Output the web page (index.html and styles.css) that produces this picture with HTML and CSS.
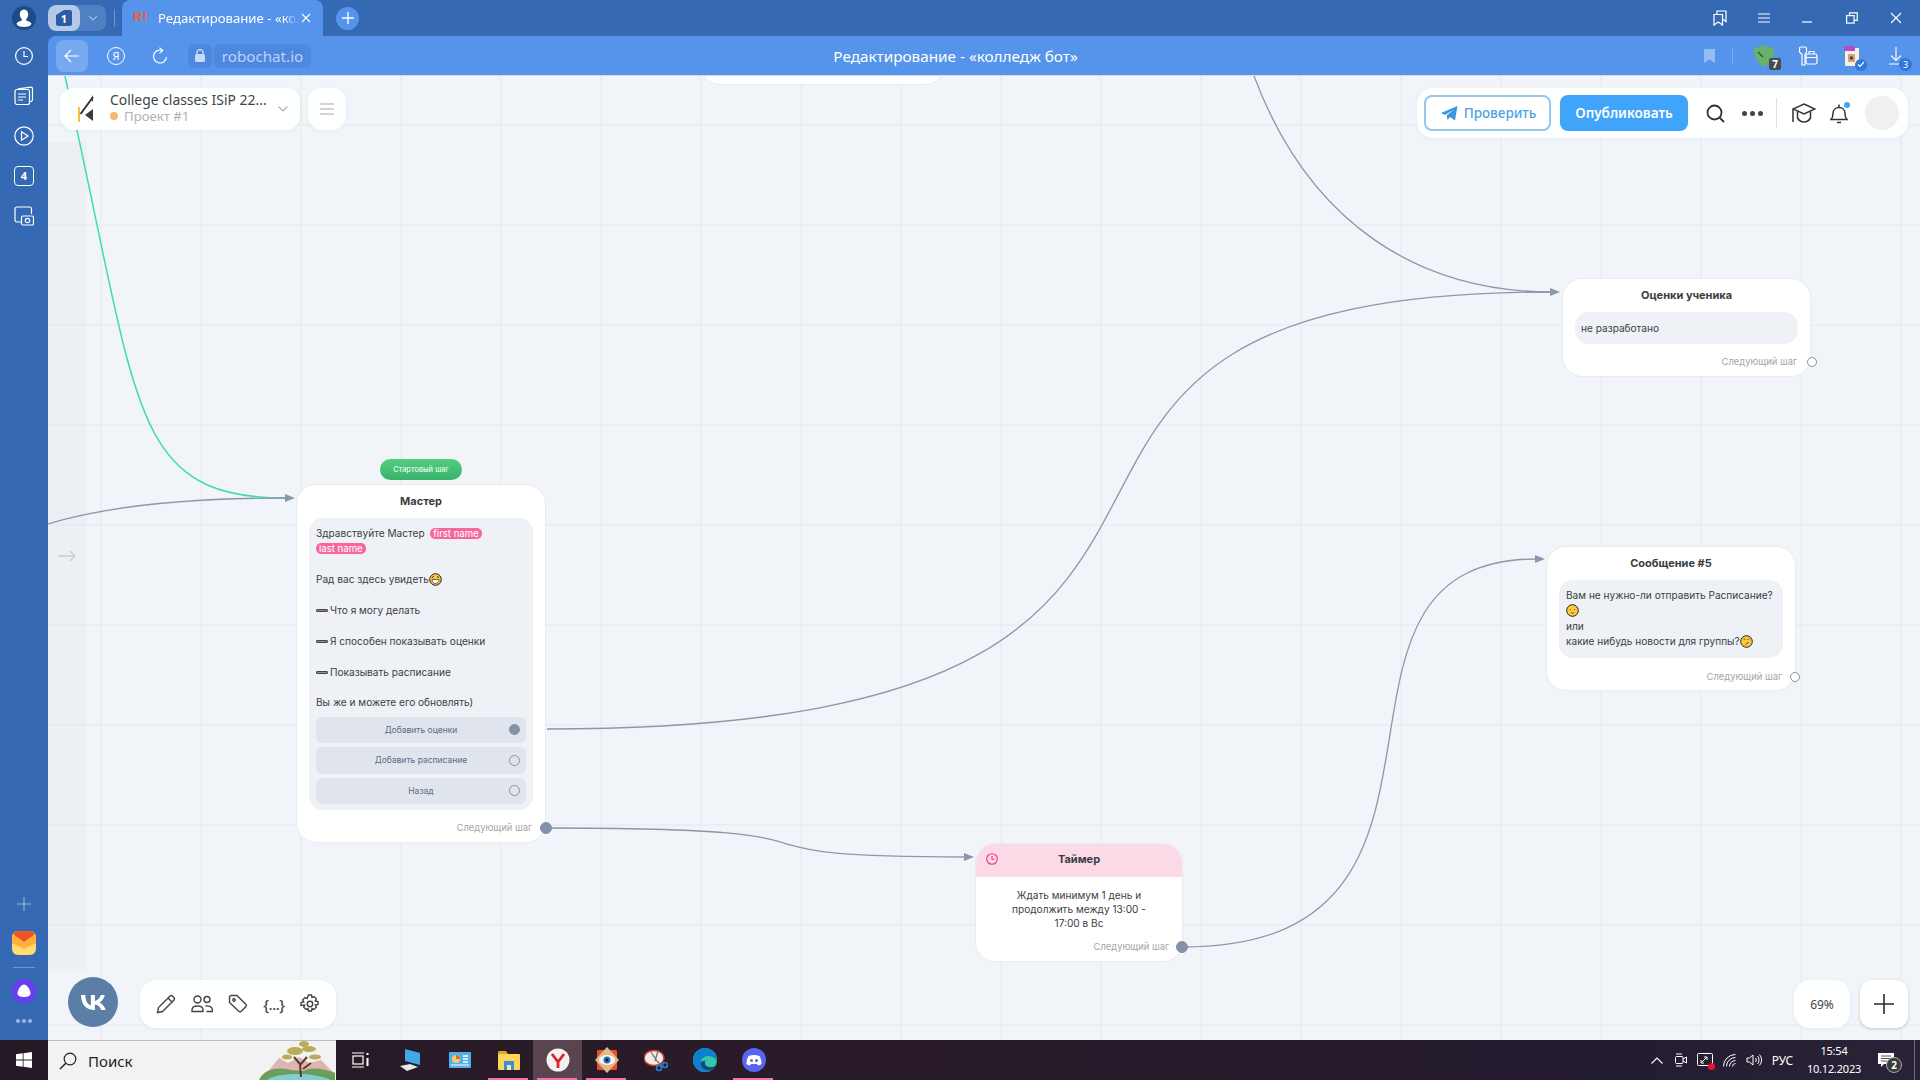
FILE: index.html
```html
<!DOCTYPE html>
<html lang="ru">
<head>
  <meta charset="UTF-8" />
  <title>Редактирование - «колледж бот»</title>
  <link rel="stylesheet" href="styles.css">
</head>
<body>
<div class="screen">

  <!-- browser title bar -->
  <header class="titlebar">
    <div class="profile">
      <svg width="24" height="24" viewBox="0 0 24 24"><circle cx="12" cy="12" r="12" fill="#1f4a86"/><path d="M12 3.500c2.800 0 4.200 2.200 4.200 4.800 0 2.200-1 4-2 4.800v1.400c2 .8 4.600 1.500 5.300 3.200-.8 2.200-3.600 3.300-7.500 3.300s-6.700-1.100-7.500-3.300c.7-1.700 3.300-2.400 5.300-3.200v-1.400c-1-.8-2-2.600-2-4.800 0-2.600 1.400-4.800 4.200-4.800z" fill="#fff"/></svg>
    </div>
    <div class="tabgroup">
      <div class="tabgroup-num">
        <svg width="18" height="18" viewBox="0 0 18 18"><path d="M1 6l8-5h6a2 2 0 0 1 2 2v12a2 2 0 0 1-2 2H3a2 2 0 0 1-2-2z" fill="#2a5ca6"/></svg>
        <span>1</span>
      </div>
      <div class="tabgroup-arrow">
        <svg width="10" height="6" viewBox="0 0 10 6"><path d="M1 1l4 4 4-4" fill="none" stroke="#9cbbe6" stroke-width="1.200"/></svg>
      </div>
    </div>
    <div class="tab-sep"></div>
    <div class="tab">
      <span class="tab-fav">R!</span>
      <span class="tab-title">Редактирование - «колледж бот»</span>
      <svg width="10" height="10" viewBox="0 0 10 10"><path d="M1 1l8 8M9 1l-8 8" stroke="#fff" stroke-width="1.100"/></svg>
    </div>
    <div class="tab-new">
      <svg width="12" height="12" viewBox="0 0 12 12"><path d="M6 0v12M0 6h12" stroke="#fff" stroke-width="1.400"/></svg>
    </div>
    <div class="win-buttons">
      <div class="win-btn"><svg width="14" height="16" viewBox="0 0 14 16" fill="none" stroke="#fff" stroke-width="1.200"><path d="M1 4.500h8.500v10.500l-4.250-3-4.250 3z"/><path d="M4 4.500V1h9v10.500l-3.500-2.500"/></svg></div>
      <div class="win-btn"><svg width="14" height="10" viewBox="0 0 14 10" stroke="#fff" stroke-width="1.100"><path d="M1 1h12M1 5h12M1 9h12"/></svg></div>
      <div class="win-btn"><svg width="12" height="12" viewBox="0 0 12 12" stroke="#fff" stroke-width="1.200"><path d="M0 10h10"/></svg></div>
      <div class="win-btn"><svg width="12" height="12" viewBox="0 0 12 12" fill="none" stroke="#fff" stroke-width="1.200"><rect x=".6" y="3.600" width="7.500" height="7.500"/><path d="M3.500 3.500V.8h7.700v7.500H8"/></svg></div>
      <div class="win-btn"><svg width="12" height="12" viewBox="0 0 12 12" stroke="#fff" stroke-width="1.100"><path d="M1 1l10 10M11 1L1 11"/></svg></div>
    </div>
  </header>

  <div class="mid">
    <!-- browser side panel -->
    <aside class="sidebar">
      <div class="side-btn"><svg width="20" height="20" viewBox="0 0 20 20" fill="none" stroke="#fff" stroke-width="1.200"><circle cx="10" cy="10" r="8.400"/><path d="M10 5v5.500h4"/></svg></div>
      <div class="side-btn"><svg width="20" height="20" viewBox="0 0 20 20" fill="none" stroke="#fff" stroke-width="1.200"><rect x="1" y="3.500" width="14.500" height="15" rx="2"/><path d="M4 8h8M4 11h8M4 14h5"/><path d="M4.500 3.500V2.800L17 1.200a1.500 1.500 0 0 1 1.500 1.500v11a2 2 0 0 1-3 1.500"/></svg></div>
      <div class="side-btn"><svg width="20" height="20" viewBox="0 0 20 20" fill="none" stroke="#fff" stroke-width="1.200"><circle cx="10" cy="10" r="9.200"/><path d="M7.500 5.800l6.500 4.200-6.500 4.200z"/></svg></div>
      <div class="side-btn"><span class="side-four">4</span></div>
      <div class="side-btn"><svg width="20" height="20" viewBox="0 0 20 20" fill="none" stroke="#fff" stroke-width="1.200"><path d="M7 16H3a2 2 0 0 1-2-2V3a2 2 0 0 1 2-2h12.500a2 2 0 0 1 2 2v5"/><rect x="7.500" y="10" width="12" height="9" rx="1.500" fill="#3569b3"/><circle cx="13.500" cy="14.500" r="2.200"/></svg></div>
      <div class="side-spacer"></div>
      <div class="side-plus"><svg width="16" height="16" viewBox="0 0 16 16" stroke="#9db9e2" stroke-width="1.100"><path d="M8 1v14M1 8h14"/></svg></div>
      <div class="side-mail">
        <svg width="24" height="24" viewBox="0 0 24 24"><rect width="24" height="24" rx="6" fill="#ffdb70"/><path d="M0 12v-6a6 6 0 0 1 6-6h12a6 6 0 0 1 6 6v6l-12 6z" fill="#ffb13b"/><path d="M1 3a6 6 0 0 1 5-3h12a6 6 0 0 1 5 3l-11 8z" fill="#f0522a"/></svg>
      </div>
      <div class="side-line"></div>
      <div class="side-alice">
        <svg width="24" height="24" viewBox="0 0 24 24"><circle cx="12" cy="12" r="12" fill="#6a3ef0"/><path d="M12 5.500c3 0 6.500 5.500 6.500 9 0 2.500-3 3.500-6.500 3.500s-6.500-1-6.500-3.500c0-3.500 3.500-9 6.500-9z" fill="#fff"/></svg>
      </div>
      <div class="side-dots"><i></i><i></i><i></i></div>
    </aside>

    <div class="browser">
      <!-- address bar -->
      <div class="addressbar">
        <div class="nav-back"><svg width="16" height="14" viewBox="0 0 16 14" fill="none" stroke="#fff" stroke-width="1.200"><path d="M15 7H1M7 1L1 7l6 6"/></svg></div>
        <div class="nav-ya"><span>Я</span></div>
        <div class="nav-reload"><svg width="16" height="18" viewBox="0 0 16 18" fill="none" stroke="#fff" stroke-width="1.200"><path d="M10.500 3.500A6.500 6.500 0 1 0 14.500 10"/><path d="M7.500 .6l3.200 2.900-3.200 2.900"/></svg></div>
        <div class="lock-chip"><svg width="10" height="13" viewBox="0 0 10 13"><path d="M2 5.500V3.500a3 3 0 0 1 6 0v2" fill="none" stroke="#c8dcf8" stroke-width="1.300"/><rect y="5" width="10" height="8" rx="1.500" fill="#c8dcf8"/></svg></div>
        <div class="url-chip">robochat.io</div>
        <div class="page-title">Редактирование - «колледж бот»</div>
        <div class="addr-tools">
          <svg class="addr-mark" width="11" height="14" viewBox="0 0 11 14"><path d="M0 0h11v14l-5.500-3.500L0 14z" fill="#94bdf4"/></svg>
          <div class="addr-sep"></div>
          <div class="addr-btn addr-shield">
            <svg width="20" height="22" viewBox="0 0 20 22"><path d="M10 0c3 2 6 2.500 10 2.500 0 8-2 15-10 19.500C2 17.500 0 10.500 0 2.500 4 2.500 7 2 10 0z" fill="#67b26a"/><path d="M4 7l5 5" stroke="#2f5a36" stroke-width="1.500"/></svg>
            <span class="shield-num">7</span>
          </div>
          <div class="addr-btn"><svg width="20" height="20" viewBox="0 0 20 20" fill="none" stroke="#fff" stroke-width="1.200"><path d="M4 19V8.500L1.500 6V2.500a1.500 1.500 0 0 1 1.500-1.500h4a1.500 1.500 0 0 1 1.500 1.500V6L7 8.500V19z"/><rect x="8" y="8" width="11" height="10" rx="1.500"/><path d="M8 11.500h11M11 8V5.500h5V8"/></svg></div>
          <div class="addr-btn addr-file">
            <svg width="16" height="20" viewBox="0 0 16 20"><rect x="1" y="2" width="14" height="18" rx="1" fill="#f4f0e6"/><rect y="0" width="11" height="5" fill="#b04fc0"/><rect x="4" y="8" width="7" height="8" fill="#e0a070"/><circle cx="7.500" cy="12" r="1.800" fill="#2f4a78"/></svg>
            <span class="file-check"><svg width="8" height="7" viewBox="0 0 8 7" fill="none" stroke="#fff" stroke-width="1.200"><path d="M1 3.500l2 2L7 1"/></svg></span>
          </div>
          <div class="addr-btn addr-down">
            <svg width="14" height="18" viewBox="0 0 14 18" fill="none" stroke="#fff" stroke-width="1.100"><path d="M7 0v13M2 8.500l5 5 5-5M0 17h11"/></svg>
            <span class="down-num">3</span>
          </div>
        </div>
      </div>

      <!-- robochat canvas -->
      <main class="canvas">
        <div class="side-strip">
          <svg width="18" height="12" viewBox="0 0 18 12" fill="none" stroke="#c6ccd4" stroke-width="1.300"><path d="M0 6h17M12 1l5 5-5 5"/></svg>
        </div>

        <svg class="links" width="1872" height="964" viewBox="48 76 1872 964" fill="none">
          <path class="link-green" d="M65 76C140 406 127 498 286 498"/>
          <path class="link" d="M48 524C110 505 190 498 286 498"/>
          <path class="link" d="M547 729C1400 729 860 292 1552 292"/>
          <path class="link" d="M1254 76C1310 225 1420 292 1552 292"/>
          <path class="link" d="M547 828C900 828 680 857 966 857"/>
          <path class="link" d="M1183 947C1509 947 1283 559 1537 559"/>
          <path class="link-tip" d="M285 494l10 4-10 4zM1550 288l10 4-10 4zM1535 555l10 4-10 4zM964 853l10 4-10 4z"/>
        </svg>

        <div class="node node-cut"></div>

        <div class="start-badge">Стартовый шаг</div>
        <section class="node node-master">
          <h4 class="node-title">Мастер</h4>
          <div class="node-body">
            <p>Здравствуйте Мастер&nbsp; <span class="tag">first name</span><br><span class="tag">last name</span></p>
            <p>Рад вас здесь увидеть<svg class="emoji" width="13" height="13" viewBox="0 0 13 13"><circle cx="6.500" cy="6.500" r="5.800" fill="#ffc83d" stroke="#222"/><path d="M3 6.500h7c0 2.500-1.500 4-3.500 4S3 9 3 6.500z" fill="#fff" stroke="#333" stroke-width=".7"/><path d="M3 4.500l2-1M10 4.500l-2-1" stroke="#333"/></svg></p>
            <p><i class="minus"></i>Что я могу делать</p>
            <p><i class="minus"></i>Я способен показывать оценки</p>
            <p><i class="minus"></i>Показывать расписание</p>
            <p class="last">Вы же и можете его обновлять)</p>
            <div class="answers">
              <div class="answer">Добавить оценки<i class="port-in filled"></i></div>
              <div class="answer">Добавить расписание<i class="port-in"></i></div>
              <div class="answer">Назад<i class="port-in"></i></div>
            </div>
          </div>
          <div class="node-next">Следующий шаг<i class="port filled"></i></div>
        </section>

        <section class="node node-grades">
          <h4 class="node-title">Оценки ученика</h4>
          <div class="node-body">не разработано</div>
          <div class="node-next">Следующий шаг<i class="port"></i></div>
        </section>

        <section class="node node-msg">
          <h4 class="node-title">Сообщение #5</h4>
          <div class="node-body">Вам не нужно-ли отправить Расписание?<br><svg class="emoji" width="13" height="13" viewBox="0 0 13 13"><circle cx="6.500" cy="6.500" r="5.800" fill="#ffc83d" stroke="#222"/><path d="M4.500 5v1M8.500 5v1M5 9h3" stroke="#553" stroke-width=".9"/></svg><br>или<br>какие нибудь новости для группы?<svg class="emoji" width="13" height="13" viewBox="0 0 13 13"><circle cx="6.500" cy="6.500" r="5.800" fill="#ffc83d" stroke="#222"/><path d="M3.500 4l2 .5M7.500 4.500l2-.5M6 8.500l3-1" stroke="#553" stroke-width=".9"/><path d="M3 10l3-1 1 2-2 1.500z" fill="#e89a2c"/></svg></div>
          <div class="node-next">Следующий шаг<i class="port"></i></div>
        </section>

        <section class="node node-timer">
          <div class="timer-head">
            <svg width="12" height="12" viewBox="0 0 12 12" fill="none" stroke="#f0357f" stroke-width="1.100"><circle cx="6" cy="6" r="5.300"/><path d="M6 3v3.300h2.500"/></svg>
            <h4 class="node-title">Таймер</h4>
          </div>
          <div class="timer-text">Ждать минимум 1 день и<br>продолжить между 13:00 -<br>17:00 в Вс</div>
          <div class="node-next">Следующий шаг<i class="port filled"></i></div>
        </section>

        <!-- floating panels -->
        <div class="panel panel-project">
          <svg class="project-logo" width="17" height="30" viewBox="0 0 17 30"><path d="M1 13v15" stroke="#f4c23e" stroke-width="2"/><path d="M2.500 20L15 3" stroke="#333" stroke-width="2"/><path d="M15 1v7l-2-3z" fill="#333"/><path d="M15 15v12l-8-6z" fill="#3c3c3c"/></svg>
          <div class="project-text">
            <div class="project-name">College classes ISiP 22...</div>
            <div class="project-sub"><i class="project-dot"></i>Проект #1</div>
          </div>
          <svg class="project-arrow" width="10" height="6" viewBox="0 0 10 6" fill="none" stroke="#aaa" stroke-width="1.200"><path d="M.6.6L5 5 9.400.6"/></svg>
        </div>
        <div class="panel panel-menu">
          <svg width="14" height="12" viewBox="0 0 14 12" stroke="#a8a8a8" stroke-width="1.200"><path d="M0 1h14M0 6h14M0 11h14"/></svg>
        </div>

        <div class="panel panel-actions">
          <button class="btn btn-check">
            <svg width="17" height="15" viewBox="0 0 17 15"><path d="M0 7L16.500 0 14 14.500 9 11l-2.500 3-.8-4.500L13 3.500 4 9z" fill="#3a97e0"/></svg>
            Проверить
          </button>
          <button class="btn btn-publish">Опубликовать</button>
          <div class="act act-search"><svg width="19" height="19" viewBox="0 0 19 19" fill="none" stroke="#333" stroke-width="1.800"><circle cx="8.500" cy="8.500" r="7"/><path d="M13.500 13.500L18 18"/></svg></div>
          <div class="act act-dots"><i></i><i></i><i></i></div>
          <div class="act-sep"></div>
          <div class="act act-hat"><svg width="24" height="20" viewBox="0 0 24 20" fill="none" stroke="#333" stroke-width="1.500"><path d="M12 1L23 6l-11 5L1 6z"/><path d="M5.500 8.500V15c1.500 2.500 4 4 6.500 4s5-1.500 6.500-4V8.500M1 6v13"/></svg></div>
          <div class="act act-bell">
            <svg width="18" height="21" viewBox="0 0 18 21" fill="none" stroke="#333" stroke-width="1.500"><path d="M1 16.500h16c-1.500-1.500-2-3-2-6 0-3.500-2.500-6-6-6s-6 2.500-6 6c0 3-.5 4.500-2 6z"/><path d="M9 1.500v3M7 19.500h4"/></svg>
            <i class="bell-dot"></i>
          </div>
          <div class="avatar"></div>
        </div>

        <div class="vk-btn">
          <svg width="25" height="15" viewBox="0 0 25 15"><path d="M13.600 15C5 15 .2 9.400 0 0h4.300c.14 6.900 3.200 9.800 5.600 10.400V0h4v6c2.400-.26 5-3 5.900-6h4c-.7 3.700-3.400 6.400-5.400 7.500 2 .9 5.100 3.300 6.300 7.500h-4.400c-.95-2.900-3.300-5.200-6.400-5.500V15z" fill="#fff"/></svg>
        </div>
        <div class="panel panel-tools">
          <div class="tool"><svg width="20" height="20" viewBox="0 0 20 20" fill="none" stroke="#444" stroke-width="1.400"><path d="M1.500 18.500l1-5L13.800 2.200a2 2 0 0 1 2.800 0l1.200 1.200a2 2 0 0 1 0 2.800L6.500 17.500z"/><path d="M12 4l4 4"/></svg></div>
          <div class="tool"><svg width="22" height="18" viewBox="0 0 22 18" fill="none" stroke="#444" stroke-width="1.400"><circle cx="6.500" cy="4.500" r="3.500"/><circle cx="16" cy="4.500" r="3"/><path d="M1 16.500v-1.500c0-2.500 2.500-4 5.500-4s5.500 1.500 5.500 4v1.500zM14.500 11c3.500-.5 6.800 1 6.800 3.500v2H15.500"/></svg></div>
          <div class="tool"><svg width="20" height="20" viewBox="0 0 20 20" fill="none" stroke="#444" stroke-width="1.400"><path d="M1.500 3a1.500 1.500 0 0 1 1.500-1.500h6l9 9a1.500 1.500 0 0 1 0 2l-5 5a1.500 1.500 0 0 1-2 0l-9.500-9z"/><circle cx="6" cy="6" r="1.200"/></svg></div>
          <div class="tool tool-code">{...}</div>
          <div class="tool"><svg width="20" height="20" viewBox="0 0 20 20" fill="none" stroke="#444" stroke-width="1.400"><circle cx="10" cy="10" r="2.700"/><path d="M8.500 1h3l.5 2.500 2-.9 2.300 2.200-1 2.100 2.700.6v3l-2.700.6 1 2.100-2.300 2.200-2-.9-.5 2.500h-3l-.5-2.500-2 .9-2.300-2.200 1-2.100L1 11.500v-3l2.700-.6-1-2.100L5 3.600l2 .9z"/></svg></div>
        </div>

        <div class="panel panel-zoom">69%</div>
        <div class="panel panel-plus">
          <svg width="20" height="20" viewBox="0 0 20 20" stroke="#2b2b2b" stroke-width="1.600"><path d="M10 0v20M0 10h20"/></svg>
        </div>
      </main>
    </div>
  </div>

  <!-- windows taskbar -->
  <footer class="taskbar">
    <div class="start">
      <svg width="16" height="16" viewBox="0 0 16 16" fill="#fff"><path d="M0 2.300l6.700-1V7.600H0zM7.500 1.200L16 0v7.600H7.500zM0 8.400h6.700v6.300l-6.700-1zM7.500 8.400H16V16l-8.500-1.200z"/></svg>
    </div>
    <div class="search">
      <svg width="18" height="18" viewBox="0 0 18 18" fill="none" stroke="#222" stroke-width="1.200"><circle cx="11" cy="7" r="5.800"/><path d="M6.800 11.200L1 17" stroke-width="1.500"/></svg>
      <span>Поиск</span>
      <svg class="search-art" width="76" height="39" viewBox="0 0 76 39">
        <path d="M2 39L20 17l9 5 11-6 10 6 12-3 14 14v6z" fill="#e0b4b0"/>
        <path d="M0 39c6-12 20-13 32-10l12 1c8-4 20-3 32 2v7z" fill="#6a9e5c"/>
        <path d="M8 39c8-7 44-9 64 0z" fill="#7fcfd0"/>
        <path d="M42 36l-1-13-6-7M41 24l7-8M44 28l8-6" fill="none" stroke="#5a3c28" stroke-width="2"/>
        <g fill="#b9ab58"><ellipse cx="36" cy="10" rx="8" ry="4"/><ellipse cx="50" cy="8" rx="7" ry="3"/><ellipse cx="45" cy="3" rx="5" ry="3"/><ellipse cx="28" cy="16" rx="5" ry="2.500"/><ellipse cx="56" cy="16" rx="6" ry="2.500"/></g>
      </svg>
    </div>
    <div class="taskview">
      <svg width="18" height="16" viewBox="0 0 18 16" fill="none" stroke="#fff" stroke-width="1.200"><path d="M0 1h12M0 15h12"/><rect x="1" y="4" width="10" height="8"/><path d="M15.500 1v2M15.500 6v8" stroke-width="2"/></svg>
    </div>
    <div class="task-item">
      <svg width="24" height="24" viewBox="0 0 24 24"><path d="M6 1l15 4v12L6 13z" fill="#3fa9ec"/><path d="M1 18l10-2 8 3-11 4z" fill="#e8e8e8"/></svg>
    </div>
    <div class="task-item">
      <svg width="22" height="16" viewBox="0 0 22 16"><rect width="22" height="16" rx="1" fill="#52b0e8"/><circle cx="7" cy="7" r="4" fill="#f4c87a"/><path d="M7 7V3a4 4 0 0 1 4 4z" fill="#e66a2c"/><path d="M14 4h5M14 7h5M14 10h5" stroke="#fff" stroke-width="1.500"/><path d="M2 13h18" stroke="#fff"/></svg>
    </div>
    <div class="task-item open">
      <svg width="22" height="20" viewBox="0 0 22 20"><path d="M0 2a1 1 0 0 1 1-1h7l2 3h-10z" fill="#e5a620"/><rect y="4" width="22" height="16" rx="1" fill="#fbd65a"/><rect x="6" y="11" width="10" height="9" fill="#3a8fd6"/><rect x="9" y="15" width="4" height="5" fill="#fbe9a0"/></svg>
    </div>
    <div class="task-item open active">
      <svg width="24" height="24" viewBox="0 0 24 24"><circle cx="12" cy="12" r="11.500" fill="#f2f2f2"/><path d="M6 6l6 8 6-8M12 14v6" fill="none" stroke="#e2202c" stroke-width="2.800"/></svg>
    </div>
    <div class="task-item open">
      <svg width="24" height="26" viewBox="0 0 24 26"><rect x="2" y="3" width="20" height="20" rx="1" fill="#e9532a"/><path d="M12 0l12 13-12 13L0 13z" fill="#e3b98a"/><ellipse cx="12" cy="13" rx="8" ry="5" fill="#f4f4f4"/><circle cx="12" cy="13" r="3.500" fill="#2b6fc0"/><circle cx="12" cy="13" r="1.400" fill="#111"/></svg>
    </div>
    <div class="task-item">
      <svg width="24" height="24" viewBox="0 0 24 24"><ellipse cx="10" cy="10" rx="10" ry="7.500" fill="#f2ece8" stroke="#c43a30" stroke-width="1.500"/><path d="M7 4l6 9 5 5M14 3l-3 10" fill="none" stroke="#777" stroke-width="1.300"/><circle cx="15" cy="20" r="2.500" fill="none" stroke="#2a7fd0" stroke-width="1.600"/><circle cx="21" cy="17" r="2.500" fill="none" stroke="#2a7fd0" stroke-width="1.600"/></svg>
    </div>
    <div class="task-item">
      <svg width="24" height="24" viewBox="0 0 24 24"><circle cx="12" cy="12" r="12" fill="#35c8a6"/><path d="M12 0A12 12 0 0 0 12 24c3 0 5-1 6.500-2-6 1.500-11-2-11-7 0-4 4-7 8-7s7 2 8.500 6C24 5 18 0 12 0z" fill="#0f7fd0"/><path d="M7.500 15c0 5 5 8.500 11 7 2-1 3.500-2.500 4.500-4.500-3 2-6.500 2-8.500 1-3-1.500-3-4-2-6-3 .5-5 1-5 2.500z" fill="#14477e"/></svg>
    </div>
    <div class="task-item open">
      <svg width="24" height="24" viewBox="0 0 24 24"><circle cx="12" cy="12" r="12" fill="#5865f2"/><path d="M6.500 8c3.500-1.500 7.500-1.500 11 0 1.500 2.500 2 5 2 8-1.300 1-2.500 1.300-3.500 1.500l-1-1.500H9L8 17.500c-1-.2-2.200-.5-3.500-1.500 0-3 .5-5.500 2-8z" fill="#fff"/><circle cx="9.500" cy="12.500" r="1.500" fill="#5865f2"/><circle cx="14.500" cy="12.500" r="1.500" fill="#5865f2"/></svg>
    </div>

    <div class="tray">
      <div class="tray-item tray-w24"><svg width="12" height="7" viewBox="0 0 12 7" fill="none" stroke="#fff" stroke-width="1.100"><path d="M.5 6.500L6 1l5.500 5.500"/></svg></div>
      <div class="tray-item tray-w24"><svg width="12" height="14" viewBox="0 0 12 14" fill="none" stroke="#fff"><rect x="0.500" y="3.500" width="7.500" height="7" rx="1"/><path d="M8 6l3.500-2v6L8 8M1 1h6M1 13h6"/></svg></div>
      <div class="tray-item tray-w23">
        <svg width="16" height="14" viewBox="0 0 16 14" fill="none" stroke="#fff"><rect x=".5" y=".5" width="15" height="12" rx="1"/><path d="M5 9l5-5M7 4h3v3M4 7v3h3"/></svg>
        <i class="rec-dot"></i>
      </div>
      <div class="tray-item tray-w27"><svg width="13" height="13" viewBox="0 0 13 13" fill="none" stroke="#fff"><path d="M.5 12.500A12 12 0 0 1 12.500 .5M3.500 12.500a9 9 0 0 1 9-9M6.500 12.500a6 6 0 0 1 6-6M9.500 12.500a3 3 0 0 1 3-3"/></svg></div>
      <div class="tray-item tray-w22"><svg width="17" height="12" viewBox="0 0 17 12" fill="none" stroke="#fff"><path d="M1 4h2.500L7 1v10L3.500 8H1zM9.500 4a3 3 0 0 1 0 4M11.500 2a6 6 0 0 1 0 8M13.500 .6a8 8 0 0 1 0 10.800"/></svg></div>
      <div class="tray-lang">РУС</div>
      <div class="tray-clock"><div>15:54</div><div>10.12.2023</div></div>
      <div class="tray-notify">
        <svg width="16" height="15" viewBox="0 0 16 15"><path d="M0 0h16v11H6l-3 3v-3H0z" fill="#fff"/><path d="M3 3h10M3 5.500h10M3 8h6" stroke="#555"/></svg>
        <span class="notify-num">2</span>
      </div>
      <div class="tray-edge"></div>
    </div>
  </footer>
</div>
</body>
</html>
```

FILE: styles.css
```css
:root{
  --title:#3569b3;
  --addr:#5594ea;
  --canvas:#f1f4f8;
  --grid:#ebeff3;
  --link:#8c97ab;
  --port:#8492a8;
  --node-font:"Inter",sans-serif;
}
*{box-sizing:border-box;}
html,body{margin:0;height:100%;}
body{
  font-family:"Noto Sans",sans-serif;
  overflow:hidden;
}
svg{display:block;}
i{font-style:normal;}
.screen{
  width:1920px;
  height:1080px;
  display:flex;
  flex-direction:column;
  background:var(--title);
}

/* title bar */
.titlebar{
  height:36px;
  display:flex;
  align-items:center;
  flex:none;
}
.profile{margin:0 12px;}
.tabgroup{
  display:flex;
  width:58px;
  height:26px;
  border-radius:8px;
  background:#4f80c4;
  overflow:hidden;
}
.tabgroup-num{
  position:relative;
  width:32px;
  display:flex;
  align-items:center;
  justify-content:center;
  background:#b4c9e6;
  border-radius:8px;
}
.tabgroup-num span{
  position:absolute;
  color:#fff;
  font-size:11px;
  font-weight:700;
}
.tabgroup-arrow{
  flex:1;
  display:flex;
  align-items:center;
  justify-content:center;
}
.tab-sep{
  width:1px;
  height:18px;
  background:#6f95cf;
  margin:0 7px 0 8px;
}
.tab{
  width:201px;
  height:36px;
  background:var(--addr);
  border-radius:8px 8px 0 0;
  display:flex;
  align-items:center;
  padding:0 12px 0 11px;
  color:#fff;
}
.tab-fav{
  width:25px;
  flex:none;
  color:#ef5f2c;
  font:700 13px/1 "Liberation Sans",sans-serif;
  margin-top:-3px;
}
.tab-title{
  flex:1;
  font-size:13.200px;
  white-space:nowrap;
  overflow:hidden;
  -webkit-mask-image:linear-gradient(90deg,#000 90%,transparent);
  mask-image:linear-gradient(90deg,#000 90%,transparent);
}
.tab svg{margin-left:3px;}
.tab-new{
  width:23px;
  height:23px;
  border-radius:50%;
  background:var(--addr);
  display:flex;
  align-items:center;
  justify-content:center;
  margin-left:13px;
}
.win-buttons{
  margin-left:auto;
  margin-right:2px;
  display:flex;
}
.win-btn{
  width:44px;
  height:36px;
  display:flex;
  align-items:center;
  justify-content:center;
}

/* side panel */
.mid{flex:1;display:flex;min-height:0;}
.sidebar{
  width:48px;
  flex:none;
  display:flex;
  flex-direction:column;
  align-items:center;
}
.side-btn{
  height:40px;
  flex:none;
  display:flex;
  align-items:center;
  justify-content:center;
}
.side-four{
  width:20px;
  height:20px;
  border:1.200px solid #fff;
  border-radius:4px;
  color:#fff;
  font-size:11px;
  font-weight:700;
  line-height:17px;
  text-align:center;
}
.side-spacer{flex:1;}
.side-plus{margin-bottom:19px;}
.side-mail{margin-bottom:12px;}
.side-line{width:22px;height:1px;background:#6f95cf;margin-bottom:11px;}
.side-alice{margin-bottom:16.500px;}
.side-dots{display:flex;gap:2px;margin-bottom:17px;}
.side-dots i{width:4px;height:4px;border-radius:50%;background:#9db9e2;}

/* address bar */
.browser{flex:1;display:flex;flex-direction:column;min-width:0;}
.addressbar{
  height:40px;
  flex:none;
  background:var(--addr);
  border-radius:8px 0 0 0;
  display:flex;
  align-items:center;
  border-bottom:1px solid #d7dde6;
  padding-left:8px;
  position:relative;
}
.nav-back{
  width:32px;
  height:32px;
  border-radius:8px;
  background:#77a9ef;
  display:flex;
  align-items:center;
  justify-content:center;
}
.nav-ya{
  width:18px;
  height:18px;
  margin-left:19px;
  border:1.200px solid #fff;
  border-radius:50%;
  color:#fff;
  font-size:11px;
  line-height:15px;
  text-align:center;
}
.nav-reload{margin-left:27px;}
.lock-chip{
  width:24px;
  height:24px;
  margin-left:20px;
  border-radius:6px;
  background:#4d88de;
  display:flex;
  align-items:center;
  justify-content:center;
}
.url-chip{
  width:97px;
  height:24px;
  margin-left:2px;
  border-radius:6px;
  background:#4d88de;
  color:#b9d3f7;
  font-size:15.200px;
  line-height:24px;
  text-align:center;
}
.page-title{
  flex:1;
  padding-right:104px;
  text-align:center;
  color:#fff;
  font-size:15.300px;
  white-space:nowrap;
}
.addr-tools{display:flex;align-items:center;margin-right:2px;}
.addr-mark{margin-right:17px;}
.addr-sep{width:1px;height:16px;background:#7fa9e6;margin-right:9px;}
.addr-btn{
  position:relative;
  width:44px;
  height:32px;
  display:flex;
  align-items:center;
  justify-content:center;
}
.shield-num{
  position:absolute;
  right:5px;
  bottom:2px;
  width:12px;
  height:12px;
  background:#4a4a4a;
  border-radius:2px;
  color:#fff;
  font-size:10px;
  font-weight:700;
  line-height:12px;
  text-align:center;
}
.file-check{
  position:absolute;
  right:7px;
  bottom:1px;
  width:12px;
  height:12px;
  border-radius:50%;
  background:#2f78d8;
  display:flex;
  align-items:center;
  justify-content:center;
}
.down-num{
  position:absolute;
  right:6px;
  bottom:1px;
  width:13px;
  height:13px;
  border-radius:50%;
  background:#2f78d8;
  color:#fff;
  font-size:9px;
  line-height:13px;
  text-align:center;
}

/* canvas */
.canvas{
  flex:1;
  position:relative;
  overflow:hidden;
  background-color:var(--canvas);
  background-image:
    linear-gradient(90deg,var(--grid) 2px,transparent 2px),
    linear-gradient(var(--grid) 2px,transparent 2px);
  background-size:100px 100px;
  background-position:52px 48px;
}
.side-strip{
  position:absolute;
  left:0;
  top:66px;
  width:39px;
  height:827px;
  background:rgba(60,70,80,.025);
}
.side-strip svg{position:absolute;left:10px;top:408px;}
.links{position:absolute;left:0;top:0;}
.link{stroke:var(--link);stroke-width:1.300;}
.link-green{stroke:#3edcb2;stroke-width:1.500;}
.link-tip{fill:var(--link);}

.node{
  position:absolute;
  background:#fff;
  border:1px solid #e9ebee;
  border-radius:20px;
  font-family:var(--node-font);
  font-size:10.100px;
  color:#3c3f44;
  padding:1px 12px;
}
.node-title{
  margin:0;
  height:32px;
  text-align:center;
  font-size:11px;
  font-weight:700;
  line-height:30px;
  color:#3a3d42;
}
.node-body{
  background:#eef1f5;
  border-radius:14px;
  line-height:15.400px;
  padding:8px 7px;
  white-space:nowrap;
}
.node-next{
  position:absolute;
  right:13px;
  color:#a2a5ab;
  font-size:9.400px;
  line-height:14px;
}
.port{
  position:absolute;
  right:-19px;
  top:2px;
  width:10px;
  height:10px;
  border-radius:50%;
  background:#fff;
  border:1.500px solid var(--port);
}
.port.filled{background:var(--port);width:12px;height:12px;right:-20px;top:1px;}

.node-cut{left:652px;top:-40px;width:245px;height:49px;}
.start-badge{
  position:absolute;
  left:332px;
  top:383px;
  width:82px;
  height:21px;
  border-radius:11px;
  background:linear-gradient(#52cf7d,#38b26c);
  color:#fff;
  font-family:var(--node-font);
  font-size:7.500px;
  line-height:21px;
  text-align:center;
}
.node-master{left:248px;top:408px;width:250px;height:359px;}
.node-master .node-next{bottom:7px;}
.node-master .node-body{height:292px;padding-bottom:6px;}
.node-body p{margin:0 0 15.400px;}
.node-body p.last{margin-bottom:6px;}
.tag{
  background:#f6689c;
  color:#fff;
  border-radius:5px;
  padding:0 3px;
  font-size:9.600px;
}
.emoji{display:inline-block;vertical-align:-3px;}
.minus{
  display:inline-block;
  width:12px;
  height:3px;
  margin-right:2px;
  vertical-align:2px;
  background:#8f8f8f;
  border:.500px solid #444;
  border-radius:1px;
}
.answers{display:flex;flex-direction:column;gap:4px;}
.answer{
  position:relative;
  height:26.500px;
  border-radius:6px;
  background:#e0e5ed;
  color:#5d6b82;
  font-size:8.500px;
  line-height:27px;
  text-align:center;
}
.port-in{
  position:absolute;
  right:6px;
  top:7.500px;
  width:11px;
  height:11px;
  border-radius:50%;
  border:1.300px solid var(--port);
}
.port-in.filled{background:var(--port);}

.node-grades{left:1514px;top:202px;width:249px;height:99px;}
.node-grades .node-body{height:32px;padding:0 6px;line-height:32px;}
.node-grades .node-next{bottom:7px;}
.node-grades .port{right:-20px;}
.node-msg{left:1498px;top:470px;width:250px;height:145px;}
.node-msg .node-body{height:78px;}
.node-msg .node-next{bottom:6px;}
.node-msg .port{right:-18px;}

.node-timer{left:927px;top:767px;width:208px;height:119px;padding:0;}
.timer-head{
  height:33px;
  background:#fbd9e6;
  border-radius:19px 19px 0 0;
  position:relative;
}
.timer-head svg{position:absolute;left:10px;top:9px;}
.timer-text{
  padding-top:11px;
  text-align:center;
  line-height:14px;
  white-space:nowrap;
}
.node-timer .node-next{bottom:7px;}
.node-timer .port.filled{right:-19px;}

/* floating panels */
.panel{
  position:absolute;
  background:rgba(255,255,255,.93);
  border-radius:14px;
  box-shadow:0 1px 4px rgba(60,70,90,.06);
  display:flex;
  align-items:center;
}
.panel-project{left:12px;top:12px;width:240px;height:42px;}
.project-logo{margin-left:18px;}
.project-text{margin:-3px 0 0 15px;flex:1;min-width:0;}
.project-name{font-size:13.900px;line-height:17px;color:#444;white-space:nowrap;}
.project-sub{
  display:flex;
  align-items:center;
  font-size:13.200px;
  line-height:17px;
  color:#b2b2b2;
}
.project-dot{
  width:8px;
  height:8px;
  border-radius:50%;
  background:#f6b66e;
  margin-right:6px;
}
.project-arrow{margin-right:12px;}
.panel-menu{left:260px;top:12px;width:38px;height:42px;justify-content:center;}

.panel-actions{
  right:12px;
  top:12px;
  width:491px;
  height:50px;
  border-radius:16px;
  padding-left:7px;
}
.btn{
  height:36px;
  border-radius:8px;
  font-family:"Noto Sans",sans-serif;
  font-size:13.500px;
  font-weight:600;
  display:flex;
  align-items:center;
  justify-content:center;
}
.btn-check{
  width:127px;
  gap:6px;
  padding-right:4px;
  background:#fff;
  border:2px solid #94c8f0;
  color:#4ea3e6;
  font-weight:500;
}
.btn-publish{
  width:128px;
  margin-left:9px;
  border:none;
  background:#3fa4fa;
  color:#fff;
}
.act{
  position:relative;
  width:36px;
  display:flex;
  align-items:center;
  justify-content:center;
}
.act-search{margin-left:9px;}
.act-dots{margin-left:1px;gap:3px;}
.act-dots i{width:5px;height:5px;border-radius:50%;background:#444;}
.act-sep{width:1px;height:30px;background:#dfe1e4;margin:0 9px 0 6px;}
.act-bell{margin-left:-1px;}
.bell-dot{
  position:absolute;
  right:7px;
  top:-1px;
  width:6px;
  height:6px;
  border-radius:50%;
  background:#3fa4fa;
}
.avatar{
  width:34px;
  height:34px;
  margin-left:8px;
  border-radius:50%;
  background:#f0f0f0;
}

.vk-btn{
  position:absolute;
  left:20px;
  top:901px;
  width:50px;
  height:50px;
  border-radius:50%;
  background:#5c7ea6;
  display:flex;
  align-items:center;
  justify-content:center;
}
.panel-tools{
  left:92px;
  top:904px;
  width:196px;
  height:48px;
  border-radius:16px;
  padding-left:8px;
}
.tool{
  width:36px;
  flex:none;
  display:flex;
  justify-content:center;
}
.tool-code{
  color:#444;
  font-size:15px;
  font-weight:500;
  letter-spacing:-.5px;
}
.panel-zoom{
  left:1746px;
  top:904px;
  width:56px;
  height:48px;
  border-radius:16px;
  justify-content:center;
  font-size:12px;
  color:#444;
}
.panel-plus{
  left:1812px;
  top:904px;
  width:48px;
  height:48px;
  border-radius:12px;
  background:#fff;
  box-shadow:0 1px 3px rgba(40,50,70,.25);
  justify-content:center;
}

/* taskbar */
.taskbar{
  height:40px;
  flex:none;
  display:flex;
  align-items:center;
  background:linear-gradient(90deg,#261a27,#2a1b28 40%,#241c30 85%,#2a2338);
  color:#fff;
}
.start{
  width:48px;
  height:40px;
  display:flex;
  align-items:center;
  justify-content:center;
}
.search{
  position:relative;
  width:288px;
  height:40px;
  background:#f2f2f2;
  border-top:1px solid #bdbdbd;
  display:flex;
  align-items:center;
  padding-left:11px;
  color:#222;
  font-size:15px;
}
.search span{margin-left:11px;}
.search-art{position:absolute;right:1px;bottom:0;}
.taskview{
  width:50px;
  display:flex;
  justify-content:center;
}
.task-item{
  position:relative;
  width:49px;
  height:40px;
  display:flex;
  align-items:center;
  justify-content:center;
}
.task-item.open::after{
  content:"";
  position:absolute;
  left:4px;
  right:5px;
  bottom:0;
  height:2px;
  background:#f472b0;
}
.task-item.active{background:#5a4450;}
.tray{margin-left:auto;display:flex;align-items:center;height:40px;}
.tray-item{
  position:relative;
  display:flex;
  align-items:center;
  justify-content:center;
}
.tray-w24{width:24px;}
.tray-w23{width:23px;}
.tray-w27{width:27px;}
.tray-w22{width:22px;}
.rec-dot{
  position:absolute;
  right:1px;
  bottom:-3px;
  width:7px;
  height:7px;
  border-radius:50%;
  background:#e8112d;
}
.tray-lang{width:35px;text-align:center;font-size:12px;}
.tray-clock{
  width:65px;
  padding-left:3px;
  text-align:center;
  font-size:11px;
  letter-spacing:-.2px;
  line-height:18px;
}
.tray-notify{
  position:relative;
  width:42px;
  display:flex;
  justify-content:center;
}
.notify-num{
  position:absolute;
  right:5px;
  top:4px;
  width:16px;
  height:16px;
  border-radius:50%;
  background:#3b3b3b;
  border:1px solid #aaa;
  font-size:10px;
  font-weight:700;
  line-height:14px;
  text-align:center;
}
.tray-edge{width:1px;height:40px;background:#6a6a72;margin:0 5px 0 7px;}
```
